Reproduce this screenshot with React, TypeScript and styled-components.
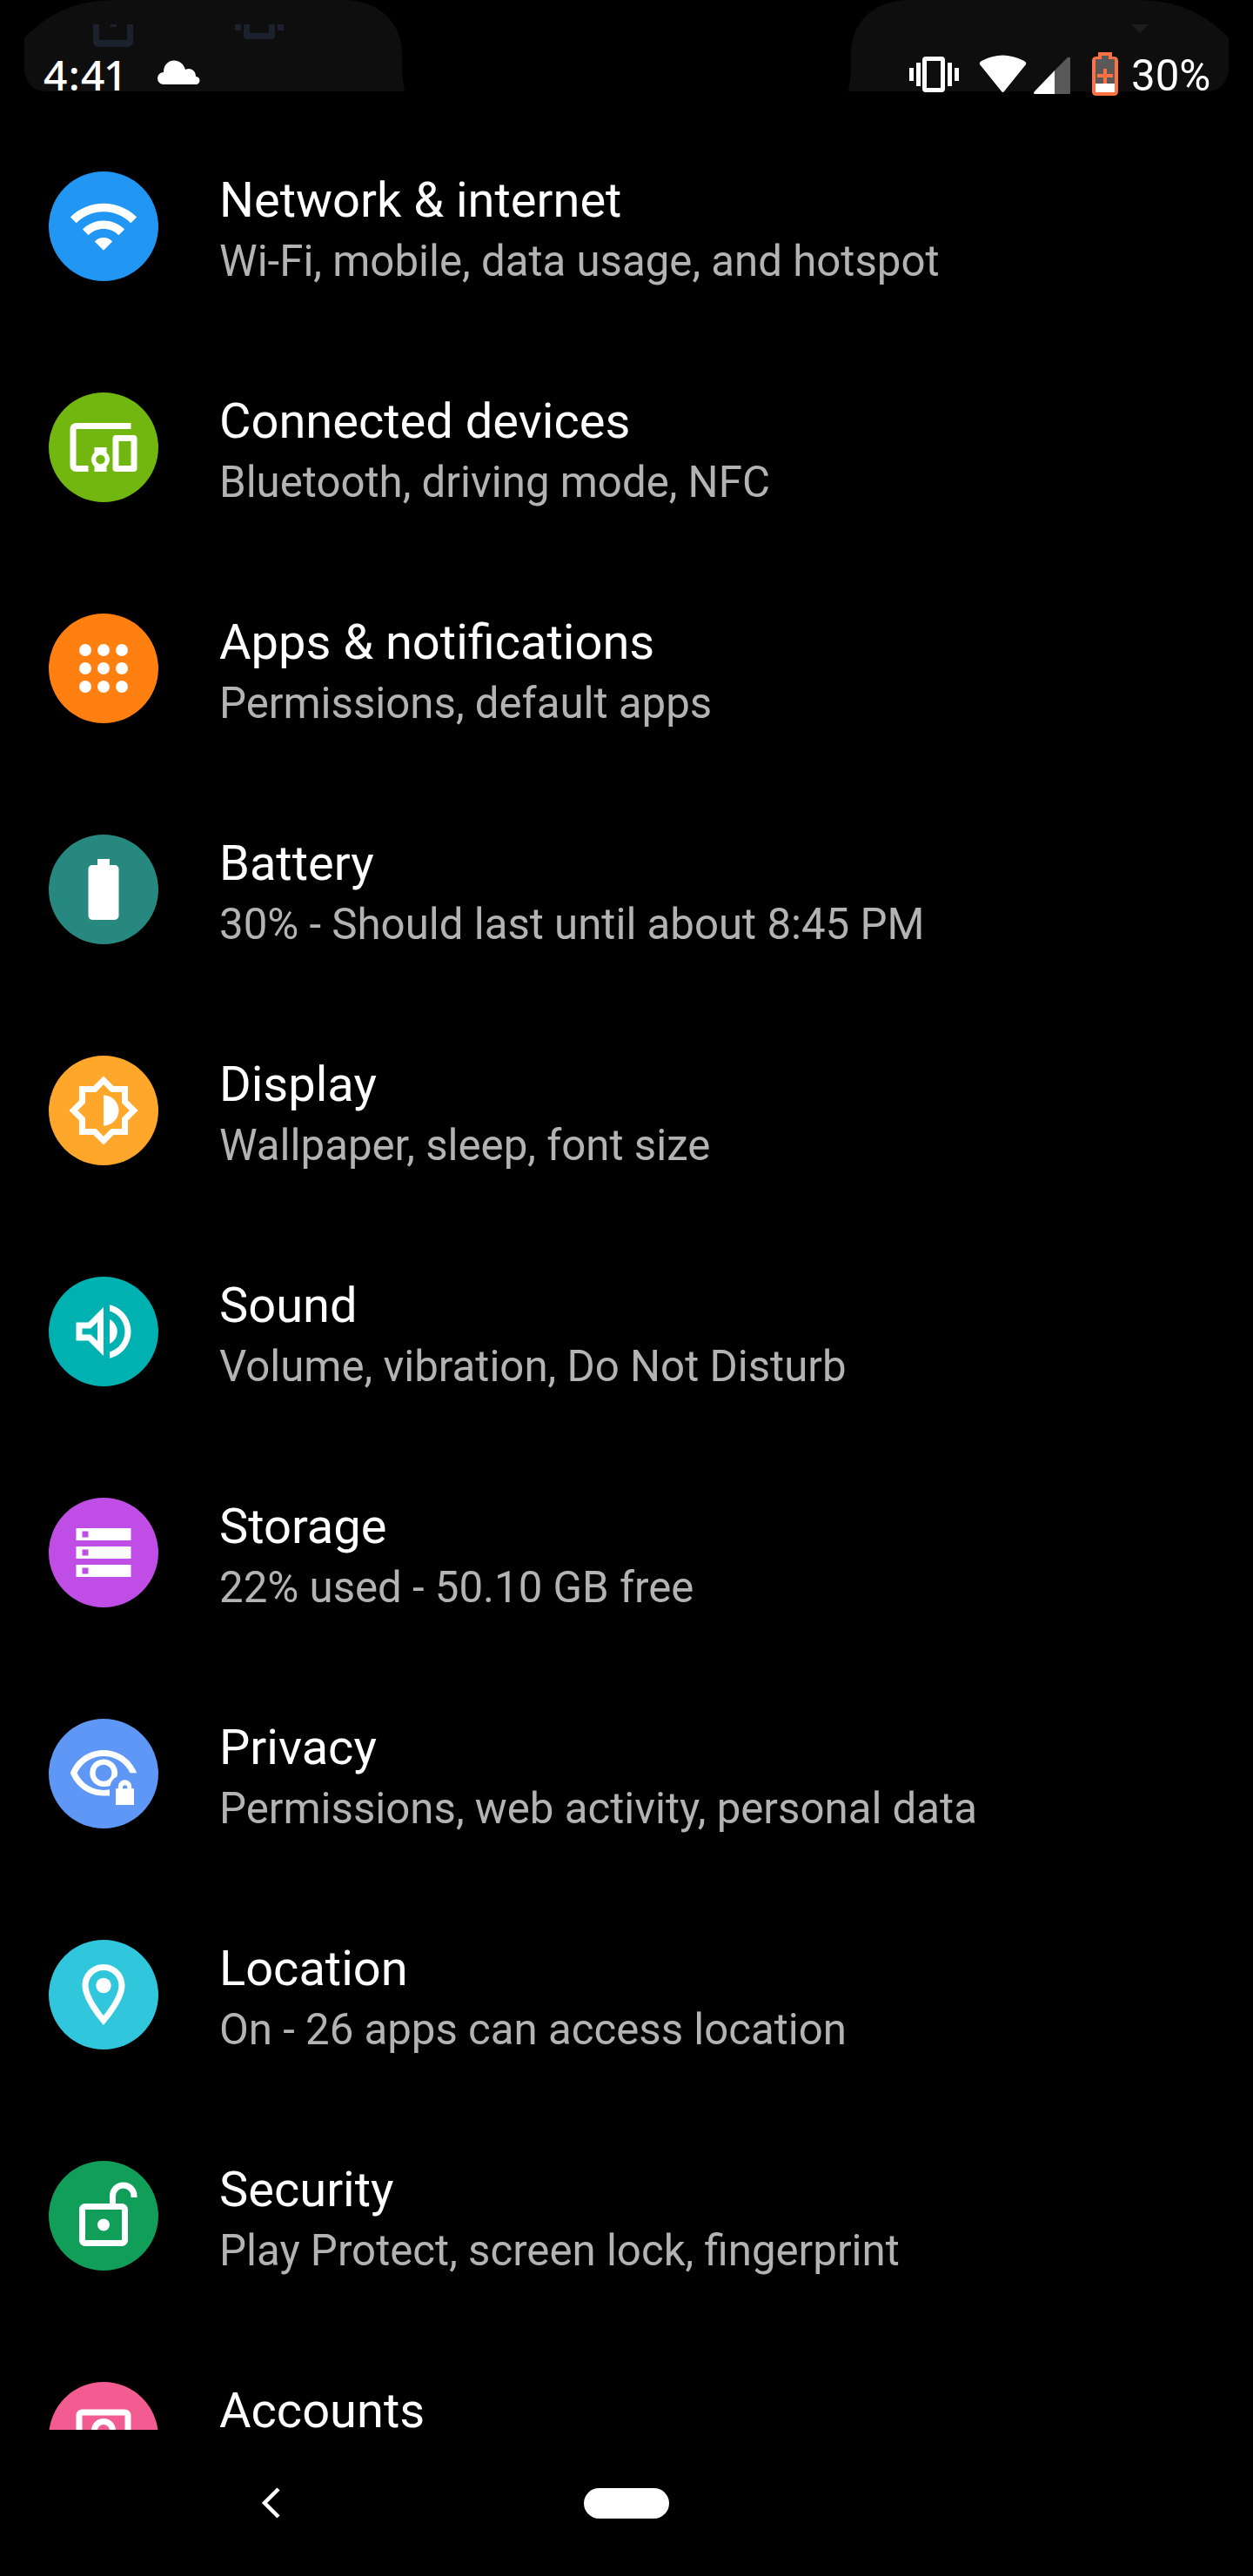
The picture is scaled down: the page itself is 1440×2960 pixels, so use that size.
import React from "react";
import styled, { createGlobalStyle } from "styled-components";

const GlobalStyle = createGlobalStyle`
  * { box-sizing: border-box; }
  body { margin: 0; background: #000; }
`;

const Screen = styled.div`
  display: flex;
  flex-direction: column;
  width: 1440px;
  height: 2960px;
  overflow: hidden;
  background: #000;
  color: #fff;
  font-family: Roboto, "Liberation Sans", sans-serif;
`;

const StatusBar = styled.header`
  position: relative;
  display: flex;
  flex: none;
  justify-content: space-between;
  height: 119px;
`;

const Backdrop = styled.svg`
  position: absolute;
  inset: 0;
  width: 1440px;
  height: 119px;
`;

const StatusGroup = styled.div<{ $left?: number; $right?: number }>`
  position: relative;
  display: flex;
  align-items: flex-start;
  padding-left: ${(p) => p.$left ?? 0}px;
  padding-right: ${(p) => p.$right ?? 0}px;
`;

const Clock = styled.span`
  width: 131px;
  padding-top: 53px;
  font: 500 48px/66px "Noto Sans", "Open Sans", sans-serif;
  white-space: nowrap;
`;

const Spaced = styled.span`
  letter-spacing: 1.2px;
`;

const Tight = styled.span`
  letter-spacing: -1.4px;
`;

const BatteryLevel = styled.span`
  width: 90px;
  padding-top: 58px;
  font-size: 49.2px;
  line-height: 58px;
  white-space: nowrap;
`;

const StatusGlyph = styled.svg`
  display: block;
  flex: none;
  height: 119px;
`;

const List = styled.main`
  flex: none;
  height: 2673px;
  padding-top: 33px;
  overflow: hidden;
`;

const Row = styled.div`
  display: flex;
  height: 254px;
  padding: 45px 56px 0;
`;

const Badge = styled.div<{ $color: string }>`
  display: flex;
  flex: none;
  align-items: center;
  justify-content: center;
  width: 126px;
  height: 126px;
  margin-right: 70px;
  border-radius: 50%;
  background: ${(p) => p.$color};
`;

const Icon = styled.svg`
  width: 84px;
  height: 84px;
  fill: #fff;
`;

const Labels = styled.div`
  display: flex;
  flex-direction: column;
  white-space: nowrap;
`;

const Title = styled.div`
  font-size: 56px;
  line-height: 66px;
`;

const Summary = styled.div`
  margin-top: 8px;
  color: #b3b3b3;
  font-size: 49.2px;
  line-height: 58px;
`;

const NavBar = styled.nav`
  display: flex;
  flex: none;
  align-items: center;
  height: 168px;
  padding-left: 297px;
`;

const Back = styled.svg`
  width: 30px;
  height: 36px;
  margin-right: 344px;
`;

const HomePill = styled.div`
  width: 98px;
  height: 35px;
  border-radius: 18px;
  background: #fff;
`;

interface Setting {
  title: string;
  summary: string;
  color: string;
  icon: React.ReactNode;
}

const settings: Setting[] = [
  {
    title: "Network & internet",
    summary: "Wi-Fi, mobile, data usage, and hotspot",
    color: "#2196f3",
    icon: (
      <path d="M1.1 9 3.05 10.95C8 6 16 6 20.95 10.95L22.9 9C16.9 3 7.1 3 1.1 9zM9.1 17 12 19.9 14.9 17C13.3 15.3 10.7 15.3 9.1 17zM5.1 13 7.05 14.95C9.8 12.2 14.2 12.2 16.95 14.95L18.9 13C15.1 9.2 8.9 9.2 5.1 13z" />
    ),
  },
  {
    title: "Connected devices",
    summary: "Bluetooth, driving mode, NFC",
    color: "#71b70f",
    icon: (
      <path d="M3 6h18V4H3c-1.1 0-2 .9-2 2v12c0 1.1.9 2 2 2h4v-2H3V6zm10 6H9v1.78c-.61.55-1 1.33-1 2.22s.39 1.67 1 2.22V20h4v-1.78c.61-.55 1-1.34 1-2.22s-.39-1.67-1-2.22V12zm-2 5.5c-.83 0-1.5-.67-1.5-1.5s.67-1.5 1.5-1.5 1.5.67 1.5 1.5-.67 1.5-1.5 1.5zM22 8h-6c-.5 0-1 .5-1 1v10c0 .5.5 1 1 1h6c.5 0 1-.5 1-1V9c0-.5-.5-1-1-1zm-1 10h-4v-8h4v8z" />
    ),
  },
  {
    title: "Apps & notifications",
    summary: "Permissions, default apps",
    color: "#ff7f11",
    icon: (
      <>
        {[6, 12, 18].map((cy) =>
          [6, 12, 18].map((cx) => <circle key={`${cx}-${cy}`} cx={cx} cy={cy} r="2" />),
        )}
      </>
    ),
  },
  {
    title: "Battery",
    summary: "30% - Should last until about 8:45 PM",
    color: "#26887f",
    icon: (
      <path d="M15.67 4H14V2h-4v2H8.33C7.6 4 7 4.6 7 5.33v15.33C7 21.4 7.6 22 8.33 22h7.33c.74 0 1.34-.6 1.34-1.33V5.33C17 4.6 16.4 4 15.67 4z" />
    ),
  },
  {
    title: "Display",
    summary: "Wallpaper, sleep, font size",
    color: "#ffa72a",
    icon: (
      <path d="M20 15.31 23.31 12 20 8.69V4h-4.69L12 .69 8.69 4H4v4.69L.69 12 4 15.31V20h4.69L12 23.31 15.31 20H20v-4.69zm-2-.83V18h-3.52L12 20.48 9.52 18H6v-3.52L3.52 12 6 9.52V6h3.52L12 3.52 14.48 6H18v3.52L20.48 12 18 14.48zM12 7v10c2.76 0 5-2.24 5-5s-2.24-5-5-5z" />
    ),
  },
  {
    title: "Sound",
    summary: "Volume, vibration, Do Not Disturb",
    color: "#00b1b1",
    icon: (
      <path d="M3 9v6h4l5 5V4L7 9H3zm7-.17v6.34L7.83 13H5v-2h2.83L10 8.83zM16.5 12c0-1.77-1.02-3.29-2.5-4.03v8.05c1.48-.73 2.5-2.25 2.5-4.02zM14 3.23v2.06c2.89.86 5 3.54 5 6.71s-2.11 5.85-5 6.71v2.06c4.01-.91 7-4.49 7-8.77s-2.99-7.86-7-8.77z" />
    ),
  },
  {
    title: "Storage",
    summary: "22% used - 50.10 GB free",
    color: "#c04de6",
    icon: (
      <path d="M3 20h18v-4H3v4zm2-3h2v2H5v-2zM3 4v4h18V4H3zm4 3H5V5h2v2zm-4 7h18v-4H3v4zm2-3h2v2H5v-2z" />
    ),
  },
  {
    title: "Privacy",
    summary: "Permissions, web activity, personal data",
    color: "#5e97f6",
    icon: (
      <g transform="translate(0 .3)">
        <path d="M12 4C7 4 2.8 7.1 1.1 11.5 2.8 15.9 7 19 12 19h2v-2.1c-.7.1-1.3.2-2 .2-3.8 0-7.1-2.2-8.7-5.6C4.9 8.1 8.2 6 12 6s7.1 2.1 8.7 5.5h2.2C21.2 7.1 17 4 12 4z" />
        <path d="M12 7c-2.5 0-4.5 2-4.5 4.5S9.500 16 12 16c.8 0 1.500-.1 2.200-.4.2-1.300 1-2.300 2.200-2.900.1-.4.2-.8.2-1.200C16.600 9 14.500 7 12 7zm0 7.200a2.700 2.700 0 1 1 0-5.400 2.700 2.700 0 0 1 0 5.400z" />
        <path d="M21.200 16.600V16a2.200 2.200 0 0 0-4.400 0v.6H16V22h6v-5.400zM18.300 16.600V16a.8.8 0 0 1 1.500 0v.6z" />
      </g>
    ),
  },
  {
    title: "Location",
    summary: "On - 26 apps can access location",
    color: "#30c7dc",
    icon: (
      <>
        <path d="M12 2C8.13 2 5 5.13 5 9c0 5.25 7 13 7 13s7-7.75 7-13c0-3.87-3.13-7-7-7zM7 9c0-2.76 2.24-5 5-5s5 2.24 5 5c0 2.88-2.88 7.19-5 9.88C9.92 16.21 7 11.85 7 9z" />
        <circle cx="12" cy="9" r="2.5" />
      </>
    ),
  },
  {
    title: "Security",
    summary: "Play Protect, screen lock, fingerprint",
    color: "#119e58",
    icon: (
      <path d="M18.5 1A4.5 4.5 0 0 0 14 5.5V8H6c-1.1 0-2 .9-2 2v10c0 1.1.9 2 2 2h12c1.1 0 2-.9 2-2V10c0-1.1-.9-2-2-2h-2V5.5a2.500 2.500 0 0 1 5 0V6h2v-.5A4.500 4.500 0 0 0 18.500 1zM18 10v10H6V10zM12 13a2 2 0 1 0 0 4 2 2 0 0 0 0-4z" />
    ),
  },
  {
    title: "Accounts",
    summary: "",
    color: "#f25c90",
    icon: (
      <path d="M19 3H5c-1.11 0-2 .9-2 2v14c0 1.1.89 2 2 2h14c1.1 0 2-.9 2-2V5c0-1.1-.9-2-2-2zm0 2v14H5V5zM12 6a4 4 0 1 0 0 8 4 4 0 0 0 0-8zm0 2a2 2 0 1 1 0 4 2 2 0 0 1 0-4z" />
    ),
  },
];

export default function App() {
  return (
    <>
      <GlobalStyle />
      <Screen>
        <StatusBar>
          <Backdrop viewBox="0 0 1440 119">
            <path
              fill="#0e0e0e"
              d="M28 43C60 12 90 0 135 0H395C438 0 462 28 462 62C462 82 463 94 465 105H54C38 105 28 94 28 78z"
            />
            <path
              fill="#0e0e0e"
              d="M1412 43C1380 12 1350 0 1305 0H1045C1002 0 978 28 978 62C978 82 977 94 975 105H1386C1402 105 1412 94 1412 78z"
            />
            <path
              fill="#1b222d"
              d="M107 28h7v18h32V28h7v19q0 7-7 7h-32q-7 0-7-7zM127 28h7v3h-7zM270 28h7v7h-7zM319 28h7v7h-7zM280 28h7v10h22V28h7v13q0 4-4 4h-28q-4 0-4-4z"
            />
            <path fill="#1d1d1d" d="M1300 28h20l-10 10z" />
          </Backdrop>
          <StatusGroup $left={50}>
            <Clock>
              <Spaced>4:</Spaced>
              <Tight>41</Tight>
            </Clock>
            <StatusGlyph width="50" viewBox="181 0 50 119">
              <path
                fill="#fff"
                d="M188 97A7 7 0 0 1 188 83C188 66 209 65 213 80C219 77 225 81 225 88A4.5 4.5 0 0 1 225 97z"
              />
            </StatusGlyph>
          </StatusGroup>
          <StatusGroup $right={50}>
            <StatusGlyph width="256" viewBox="1044 0 256 119">
              <path
                fill="#fff"
                fillRule="evenodd"
                d="M1045 78h5v15h-5zM1053 72h5v27h-5zM1089 72h5v27h-5zM1097 78h5v15h-5zM1064 65h18q4 0 4 4v33q0 4-4 4h-18q-4 0-4-4v-33q0-4 4-4zM1065 70v31h16v-31z"
              />
              <path
                fill="#fff"
                d="M1126 74Q1125 72 1128 70Q1152 57 1177 70Q1180 72 1179 74L1154 105Q1152.500 107 1151 105z"
              />
              <path fill="#595959" d="M1212 81l15-15q3-1 3 1v40q0 1-1 1h-17z" />
              <path fill="#fff" d="M1212 81v27h-23q-2-1 0-3z" />
              <path fill="#595959" d="M1257 66h8v-4h10v4h8v30h-26z" />
              <path fill="#fff" d="M1257 96h26v11h-26z" />
              <path
                fill="#ff7043"
                fillRule="evenodd"
                d="M1262 60h16v5h2q5 0 5 5v35q0 5-5 5h-20q-5 0-5-5v-35q0-5 5-5h2zM1266 64v4h-7v38h22v-38h-7v-4zM1268 79h4v6h7v4h-7v7h-4v-7h-7v-4h7z"
              />
            </StatusGlyph>
            <BatteryLevel>30%</BatteryLevel>
          </StatusGroup>
        </StatusBar>
        <List>
          {settings.map((s) => (
            <Row key={s.title}>
              <Badge $color={s.color}>
                <Icon viewBox="0 0 24 24">{s.icon}</Icon>
              </Badge>
              <Labels>
                <Title>{s.title}</Title>
                {s.summary && <Summary>{s.summary}</Summary>}
              </Labels>
            </Row>
          ))}
        </List>
        <NavBar>
          <Back viewBox="0 0 30 36">
            <path d="M23 2 7 18l16 16" fill="none" stroke="#fff" strokeWidth="4.5" />
          </Back>
          <HomePill />
        </NavBar>
      </Screen>
    </>
  );
}
